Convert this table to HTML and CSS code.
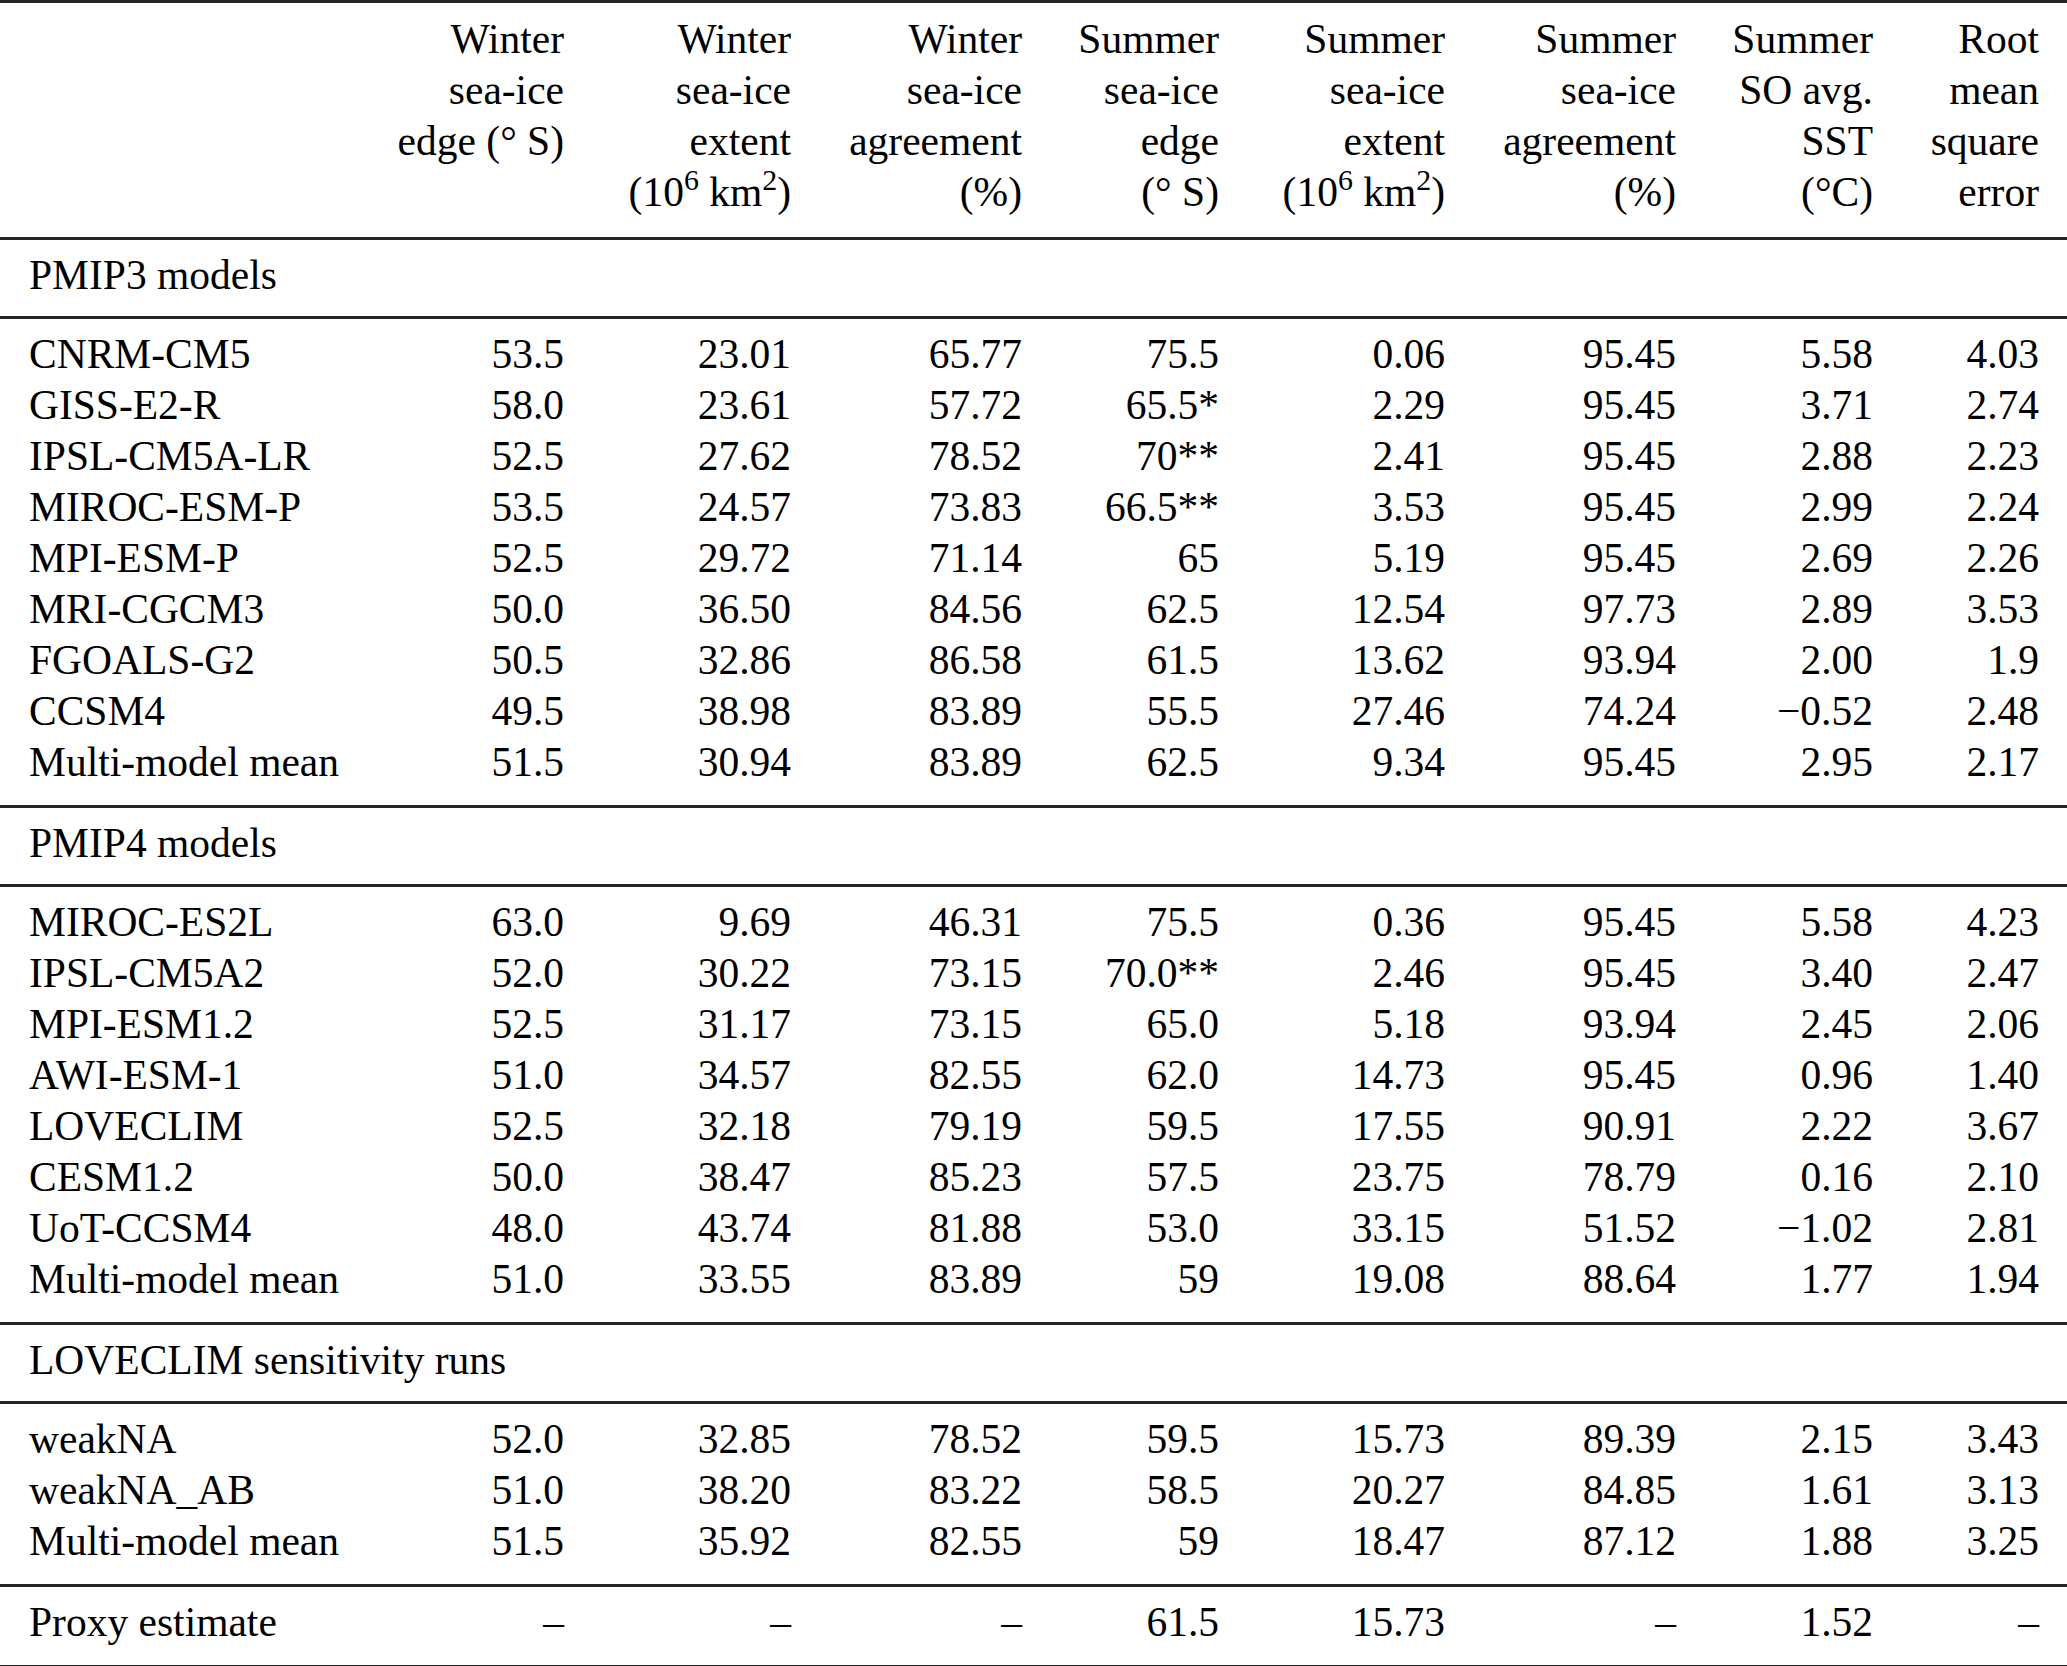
FILE: index.html
```html
<!DOCTYPE html>
<html lang="en">
<head>
<meta charset="utf-8">
<title>Sea-ice comparison table</title>
<link rel="stylesheet" href="styles.css">
</head>
<body>
<table class="data">
  <colgroup>
    <col class="c0"><col class="c1"><col class="c2"><col class="c3"><col class="c4"><col class="c5"><col class="c6"><col class="c7"><col class="c8">
  </colgroup>
  <thead>
    <tr>
      <th class="lab"></th>
      <th>Winter<br>sea-ice<br>edge (° S)</th>
      <th>Winter<br>sea-ice<br>extent<br>(10<sup>6</sup> km<sup>2</sup>)</th>
      <th>Winter<br>sea-ice<br>agreement<br>(%)</th>
      <th>Summer<br>sea-ice<br>edge<br>(° S)</th>
      <th>Summer<br>sea-ice<br>extent<br>(10<sup>6</sup> km<sup>2</sup>)</th>
      <th>Summer<br>sea-ice<br>agreement<br>(%)</th>
      <th>Summer<br>SO avg.<br>SST<br>(°C)</th>
      <th>Root<br>mean<br>square<br>error</th>
    </tr>
  </thead>
  <tbody class="section"><tr><td class="lab" colspan="9">PMIP3 models</td></tr></tbody>
  <tbody class="group">
    <tr><td class="lab">CNRM-CM5</td><td>53.5</td><td>23.01</td><td>65.77</td><td>75.5</td><td>0.06</td><td>95.45</td><td>5.58</td><td>4.03</td></tr>
    <tr><td class="lab">GISS-E2-R</td><td>58.0</td><td>23.61</td><td>57.72</td><td>65.5*</td><td>2.29</td><td>95.45</td><td>3.71</td><td>2.74</td></tr>
    <tr><td class="lab">IPSL-CM5A-LR</td><td>52.5</td><td>27.62</td><td>78.52</td><td>70**</td><td>2.41</td><td>95.45</td><td>2.88</td><td>2.23</td></tr>
    <tr><td class="lab">MIROC-ESM-P</td><td>53.5</td><td>24.57</td><td>73.83</td><td>66.5**</td><td>3.53</td><td>95.45</td><td>2.99</td><td>2.24</td></tr>
    <tr><td class="lab">MPI-ESM-P</td><td>52.5</td><td>29.72</td><td>71.14</td><td>65</td><td>5.19</td><td>95.45</td><td>2.69</td><td>2.26</td></tr>
    <tr><td class="lab">MRI-CGCM3</td><td>50.0</td><td>36.50</td><td>84.56</td><td>62.5</td><td>12.54</td><td>97.73</td><td>2.89</td><td>3.53</td></tr>
    <tr><td class="lab">FGOALS-G2</td><td>50.5</td><td>32.86</td><td>86.58</td><td>61.5</td><td>13.62</td><td>93.94</td><td>2.00</td><td>1.9</td></tr>
    <tr><td class="lab">CCSM4</td><td>49.5</td><td>38.98</td><td>83.89</td><td>55.5</td><td>27.46</td><td>74.24</td><td>−0.52</td><td>2.48</td></tr>
    <tr><td class="lab">Multi-model mean</td><td>51.5</td><td>30.94</td><td>83.89</td><td>62.5</td><td>9.34</td><td>95.45</td><td>2.95</td><td>2.17</td></tr>
  </tbody>
  <tbody class="section"><tr><td class="lab" colspan="9">PMIP4 models</td></tr></tbody>
  <tbody class="group">
    <tr><td class="lab">MIROC-ES2L</td><td>63.0</td><td>9.69</td><td>46.31</td><td>75.5</td><td>0.36</td><td>95.45</td><td>5.58</td><td>4.23</td></tr>
    <tr><td class="lab">IPSL-CM5A2</td><td>52.0</td><td>30.22</td><td>73.15</td><td>70.0**</td><td>2.46</td><td>95.45</td><td>3.40</td><td>2.47</td></tr>
    <tr><td class="lab">MPI-ESM1.2</td><td>52.5</td><td>31.17</td><td>73.15</td><td>65.0</td><td>5.18</td><td>93.94</td><td>2.45</td><td>2.06</td></tr>
    <tr><td class="lab">AWI-ESM-1</td><td>51.0</td><td>34.57</td><td>82.55</td><td>62.0</td><td>14.73</td><td>95.45</td><td>0.96</td><td>1.40</td></tr>
    <tr><td class="lab">LOVECLIM</td><td>52.5</td><td>32.18</td><td>79.19</td><td>59.5</td><td>17.55</td><td>90.91</td><td>2.22</td><td>3.67</td></tr>
    <tr><td class="lab">CESM1.2</td><td>50.0</td><td>38.47</td><td>85.23</td><td>57.5</td><td>23.75</td><td>78.79</td><td>0.16</td><td>2.10</td></tr>
    <tr><td class="lab">UoT-CCSM4</td><td>48.0</td><td>43.74</td><td>81.88</td><td>53.0</td><td>33.15</td><td>51.52</td><td>−1.02</td><td>2.81</td></tr>
    <tr><td class="lab">Multi-model mean</td><td>51.0</td><td>33.55</td><td>83.89</td><td>59</td><td>19.08</td><td>88.64</td><td>1.77</td><td>1.94</td></tr>
  </tbody>
  <tbody class="section"><tr><td class="lab" colspan="9">LOVECLIM sensitivity runs</td></tr></tbody>
  <tbody class="group">
    <tr><td class="lab">weakNA</td><td>52.0</td><td>32.85</td><td>78.52</td><td>59.5</td><td>15.73</td><td>89.39</td><td>2.15</td><td>3.43</td></tr>
    <tr><td class="lab">weakNA_AB</td><td>51.0</td><td>38.20</td><td>83.22</td><td>58.5</td><td>20.27</td><td>84.85</td><td>1.61</td><td>3.13</td></tr>
    <tr><td class="lab">Multi-model mean</td><td>51.5</td><td>35.92</td><td>82.55</td><td>59</td><td>18.47</td><td>87.12</td><td>1.88</td><td>3.25</td></tr>
  </tbody>
  <tbody class="group">
    <tr><td class="lab">Proxy estimate</td><td>–</td><td>–</td><td>–</td><td>61.5</td><td>15.73</td><td>–</td><td>1.52</td><td>–</td></tr>
  </tbody>
</table>
</body>
</html>
```

FILE: styles.css
```css
html, body {
  margin: 0;
  padding: 0;
  background: #ffffff;
}

body {
  font-family: "Liberation Serif", "Times New Roman", serif;
  font-size: 41.5px;
  color: #000000;
}

.data {
  width: 2067px;
  table-layout: fixed;
  border-collapse: separate;
  border-spacing: 0;
  border-top: 3px solid #262626;
}

.c0 { width: 369px; }
.c1 { width: 224px; }
.c2 { width: 227px; }
.c3 { width: 231px; }
.c4 { width: 197px; }
.c5 { width: 226px; }
.c6 { width: 231px; }
.c7 { width: 197px; }
.c8 { width: 165px; }

.data th,
.data td {
  box-sizing: border-box;
  padding: 0 29px 0 0;
  line-height: 51px;
  text-align: right;
  white-space: nowrap;
  font-weight: normal;
}

.data th:last-child,
.data td:last-child {
  padding-right: 28px;
}

.data .lab {
  text-align: left;
  padding-left: 29px;
  padding-right: 0;
}

.data thead th {
  vertical-align: top;
  padding-top: 11px;
  padding-bottom: 19px;
  border-bottom: 3px solid #262626;
}

.data sup {
  font-size: 0.72em;
  line-height: 0;
  vertical-align: 0.55em;
}

.section td {
  padding-top: 10px;
  padding-bottom: 15px;
  border-bottom: 3px solid #262626;
}

.group tr:first-child td {
  padding-top: 10px;
}

.group tr:last-child td {
  padding-bottom: 17px;
  border-bottom: 3px solid #262626;
}
```
